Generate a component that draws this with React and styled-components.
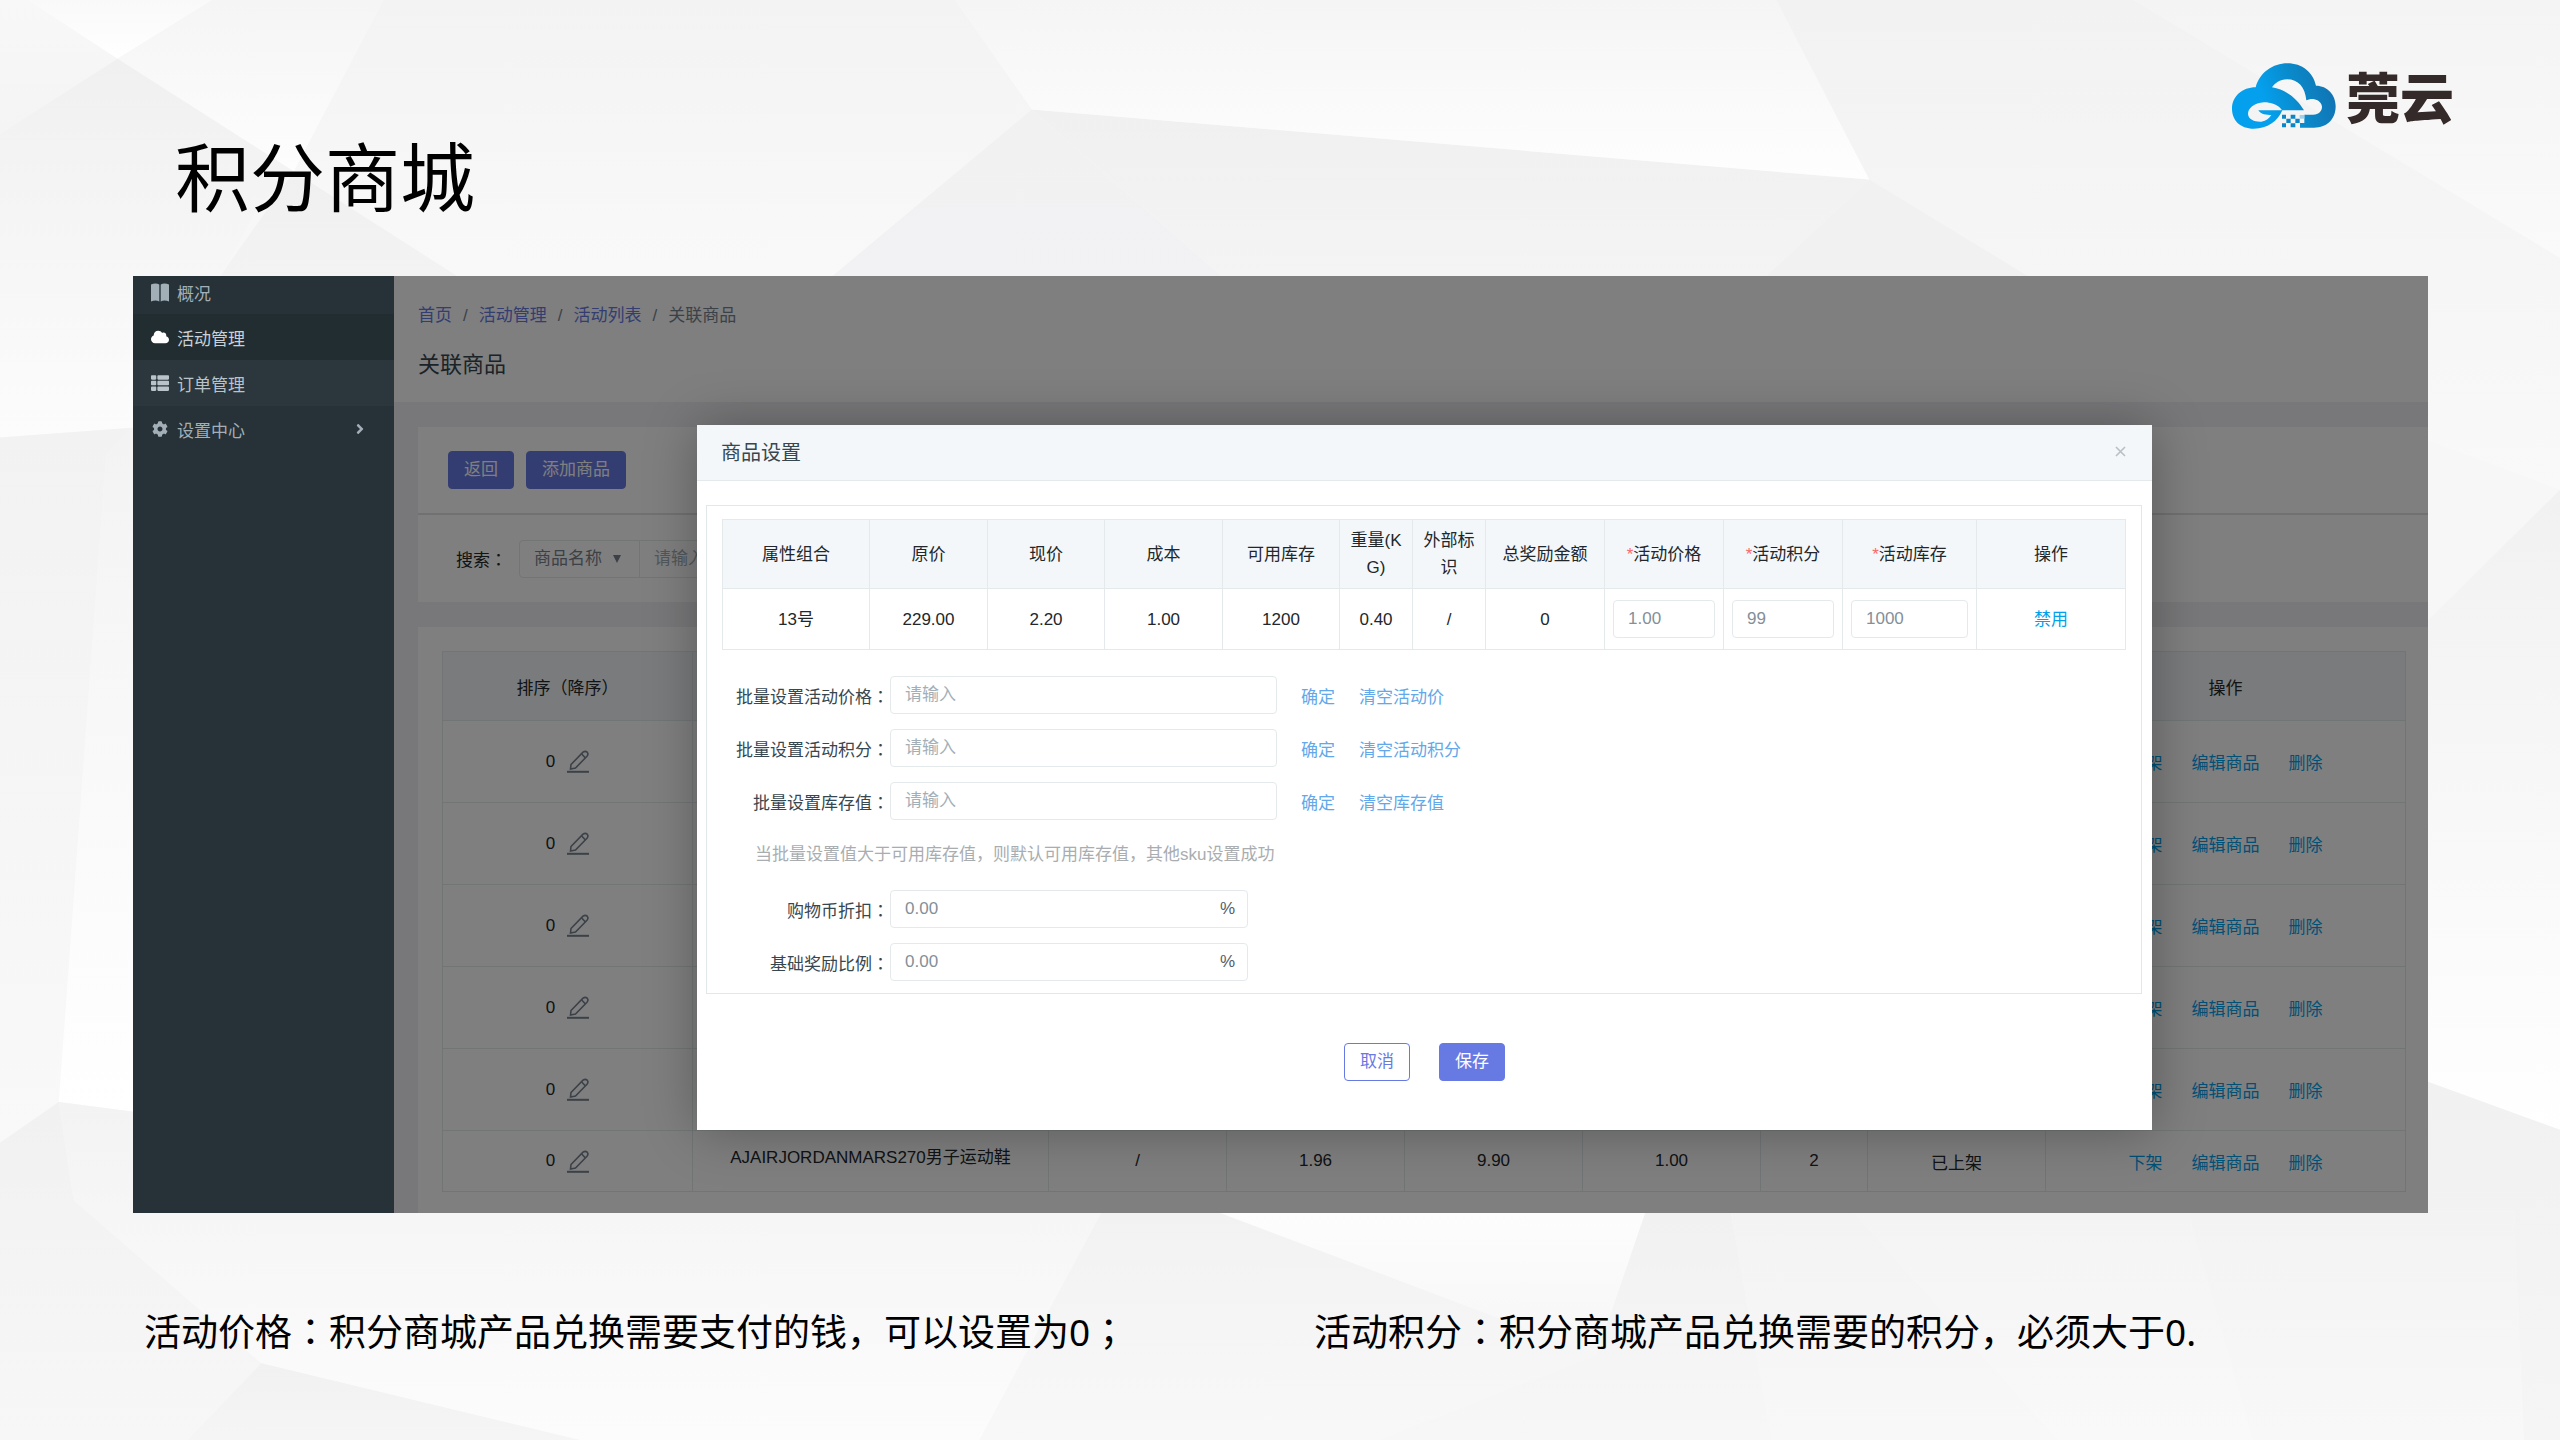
import React from 'react'
import styled, { createGlobalStyle, css } from 'styled-components'
import { FaCloud, FaCog, FaThList, FaAngleRight } from 'react-icons/fa'

const GlobalStyle = createGlobalStyle`
  * {
    box-sizing: border-box;
  }

  body {
    margin: 0;
    font-family: 'Liberation Sans', 'Noto Sans CJK SC', sans-serif;
    font-size: 17px;
    color: #37474f;
  }

  a {
    text-decoration: none;
  }

  button, input, select {
    font: inherit;
  }
`;

const Slide = styled.div`
  position: relative;
  z-index: 0;
  display: flex;
  flex-direction: column;
  min-height: 100vh;
  background: #f7f7f7;
`;

const Facets = styled.svg`
  position: absolute;
  inset: 0;
  z-index: -1;
  width: 100%;
  height: 100%;
`;

const SlideHeader = styled.header`
  display: flex;
  justify-content: space-between;
  align-items: flex-start;
  height: 276px;
  padding: 62px 106px 0 175px;
`;

const SlideTitle = styled.h1`
  margin: 56px 0 0;
  font-family: 'Noto Sans CJK SC', sans-serif;
  font-size: 75px;
  font-weight: 400;
  line-height: 112px;
  color: #000;
`;

const Brand = styled.div`
  display: flex;
  align-items: center;
  gap: 10px;
  height: 68px;
  font-family: 'Noto Sans CJK SC', sans-serif;
  font-size: 54px;
  font-weight: 900;
  line-height: 68px;
  color: #332a29;
`;

const Screen = styled.section`
  display: grid;
  grid-template-columns: 261px 1fr;
  margin: 0 132px 0 133px;
`;

const Sidebar = styled.nav`
  display: flex;
  flex-direction: column;
  background: #263238;
`;

const MenuItem = styled.a`
  display: flex;
  align-items: center;
  gap: 8px;
  height: 46px;
  padding: 0 25px 0 18px;
  color: #a3afb7;
  ${({ $first }) => $first && css`
    height: 38px;
    padding-bottom: 6px;
  `}
  ${({ $active }) => $active && css`
    background: #222d32;
    color: #c9d1d6;
  `}
  ${({ $hover }) => $hover && css`
    background: #2b373d;
    color: #b9c3c9;
  `}

  svg {
    flex: none;
    min-width: 18px;
    color: ${({ $active }) => ($active ? '#fff' : 'inherit')};
  }
`;

const MenuText = styled.span`
  flex: 1;
`;

const Main = styled.main`
  position: relative;
  background: #f1f1f5;
`;

const PageHeader = styled.div`
  height: 126px;
  padding: 26px 24px 0;
  background: #fff;
`;

const Breadcrumb = styled.div`
  display: flex;
  gap: 11px;
  line-height: 28px;
  color: #76838f;

  a {
    color: #677ae4;
  }
`;

const PageTitle = styled.h2`
  margin: 19px 0 0;
  font-size: 22px;
  font-weight: 400;
  line-height: 32px;
  color: #37474f;
`;

const Panel = styled.div`
  margin: 25px 0 0 24px;
  background: #fff;
`;

const Toolbar = styled.div`
  display: flex;
  gap: 12px;
  padding: 24px 30px;
  border-bottom: 2px solid #dfe2e4;
`;

const Button = styled.button`
  height: 38px;
  padding: 0 15px;
  border: 1px solid #677ae4;
  border-radius: 4px;
  line-height: 34px;
  background: ${({ $outline }) => ($outline ? '#fff' : '#677ae4')};
  color: ${({ $outline }) => ($outline ? '#677ae4' : '#fff')};
`;

const SearchBar = styled.div`
  display: flex;
  align-items: center;
  height: 87px;
  padding: 0 38px;
`;

const SearchLabel = styled.label`
  width: 63px;
  color: #22272b;
`;

const SelectBox = styled.div`
  display: flex;
  align-items: center;
  width: 121px;
  height: 38px;
  padding: 0 18px 0 14px;
  border: 1px solid #e4eaec;
  border-radius: 4px 0 0 4px;
  color: #76838f;
`;

const Select = styled.select`
  flex: 1;
  min-width: 0;
  padding: 0;
  border: 0;
  appearance: none;
  background: transparent;
  color: inherit;
`;

const Input = styled.input`
  width: ${({ $width }) => $width || '100%'};
  height: 38px;
  padding: 0 14px;
  border: 1px solid #e4eaec;
  border-radius: 4px;
  background: #fff;
  color: #838f99;

  &::placeholder {
    color: #a3afb7;
  }
`;

const SearchInput = styled(Input)`
  margin-left: -1px;
  border-radius: 0 4px 4px 0;
`;

const ListPanel = styled(Panel)`
  padding: 24px 22px 21px 24px;
`;

const Table = styled.table`
  width: 100%;
  table-layout: fixed;
  border-collapse: collapse;
  color: #22272b;

  th, td {
    padding: 0 9px;
    border: 1px solid #e4eaec;
    text-align: center;
    font-weight: 400;
  }

  th {
    background: #f3f7fa;
  }
`;

const Col = styled.col`
  width: ${({ $width }) => $width}px;
`;

const Row = styled.tr`
  height: ${({ $height }) => $height}px;
`;

const SortCell = styled.div`
  display: flex;
  align-items: center;
  justify-content: center;
  gap: 12px;

  svg {
    color: #76838f;
  }
`;

const ProductName = styled.div`
  padding-bottom: 12px;
  white-space: nowrap;
`;

const Actions = styled.div`
  display: flex;
  justify-content: center;
  gap: 29px;
`;

const Link = styled.a`
  color: ${({ $soft }) => ($soft ? '#62a8ea' : '#03a0ec')};
`;

const Backdrop = styled.div`
  position: absolute;
  inset: 0;
  display: flex;
  align-items: flex-start;
  padding: 149px 277px 0 303px;
  overflow: hidden;
  background: rgba(0, 0, 0, 0.5);
`;

const Modal = styled.div`
  flex: 1;
  background: #fff;
  box-shadow: 1px 1px 50px rgba(0, 0, 0, 0.3);
`;

const ModalHeader = styled.div`
  display: flex;
  justify-content: space-between;
  align-items: center;
  height: 56px;
  padding: 0 25px 2px 24px;
  border-bottom: 1px solid #e4eaec;
  background: #f3f7fa;
`;

const ModalTitle = styled.h3`
  margin: 0;
  font-size: 20px;
  font-weight: 400;
  color: #37474f;
`;

const CloseButton = styled.button`
  display: flex;
  padding: 0;
  border: 0;
  background: transparent;
  color: #b9bfc4;
`;

const ModalBody = styled.div`
  margin: 24px 10px 0 9px;
  padding: 13px 15px 12px;
  border: 1px solid #e0e8ea;
`;

const SkuTable = styled(Table)`
  line-height: 27px;
  word-break: break-all;

  td {
    padding: 0 8px;
  }
`;

const Required = styled.span`
  color: #f96868;
`;

const FormRows = styled.form`
  display: flex;
  flex-direction: column;
  gap: 15px;
  margin-top: 26px;
`;

const FormRow = styled.div`
  display: flex;
  align-items: center;
  gap: 24px;
  height: 38px;
`;

const Label = styled.label`
  width: 167px;
  margin-right: -23px;
  text-align: right;
  color: #37474f;
`;

const Hint = styled.p`
  margin: 0;
  padding-left: 33px;
  line-height: 40px;
  color: #a9adb0;
`;

const PercentBox = styled.div`
  display: flex;
  align-items: center;
  width: 358px;
  height: 38px;
  padding-right: 12px;
  border: 1px solid #e4eaec;
  border-radius: 4px;
  color: #526069;
`;

const PercentInput = styled(Input)`
  flex: 1;
  height: 34px;
  border: 0;
`;

const ModalFooter = styled.div`
  display: flex;
  justify-content: center;
  gap: 29px;
  padding: 49px 0;
`;

const Captions = styled.footer`
  display: flex;
  padding: 89px 144px 70px;
  font-family: 'Noto Sans', 'Noto Sans CJK SC', sans-serif;
  font-size: 37px;
  line-height: 56px;
  color: #000;
`;

const Caption = styled.p`
  flex: ${({ $basis }) => `0 0 ${$basis}`};
  margin: 0;
  white-space: nowrap;
`;

// full-width colons sit in the middle of their box
const Mark = styled.span`
  font-family: 'Noto Sans CJK JP', sans-serif;
`;

const facets = [
  ['0,0 17,0 72,36 0,82', '#f8f8f8', '#f4f4f4'],
  ['17,0 130,0 72,36', '#f9f9f9', '#ffffff'],
  ['130,0 235,0 180,105 72,36', '#f5f5f5', '#fdfdfd'],
  ['72,36 180,105 158,127 135,169 81,262 0,268 0,82', '#f0f0f0', '#fcfcfc'],
  ['180,105 280,169 340,220 81,262 135,169', '#f0f0f1', '#f7f7f7'],
  ['235,0 585,0 632,67 510,169 340,220 280,169 180,105', '#f3f3f3', '#fbfbfb'],
  ['632,67 748,169 748,200 480,200 510,169', '#f1f1f2', '#f2f2f4'],
  ['632,67 1145,110 1082,169 1082,200 748,200 748,169', '#f0f0f0', '#f5f5f5'],
  ['585,0 1088,0 1145,110 632,67', '#f5f5f5', '#fefefe'],
  ['1088,0 1307,0 1568,158 1568,300 1300,200 1242,169 1145,110', '#f2f2f3', '#f9f9f9'],
  ['1145,110 1242,169 1300,200 1082,200 1082,169', '#f1f1f2', '#f1f1f1'],
  ['1307,0 1568,0 1568,158', '#f4f4f4', '#fafafa'],
  ['0,268 81,262 81,290 65,278 36,675 0,700', '#f2f2f2', '#f9f9f9'],
  ['65,278 81,262 90,300 90,682 36,675', '#f3f3f3', '#ffffff'],
  ['0,700 36,675 45,735 160,835 115,882 0,882', '#f1f1f2', '#f7f7f8'],
  ['36,675 90,682 675,742 600,882 355,882 160,835 45,735', '#f3f3f4', '#fcfcfc'],
  ['160,835 355,882 115,882', '#f1f1f2', '#f5f5f5'],
  ['675,742 745,742 978,830 845,882 600,882', '#f2f2f3', '#f8f8f8'],
  ['745,742 1008,742 978,830', '#fdfdfd', '#f6f6f6'],
  ['1008,742 1060,742 1085,882 845,882 978,830', '#f1f1f2', '#f7f7f7'],
  ['1060,742 1135,742 1260,882 1085,882', '#f3f3f4', '#f8f8f8'],
  ['1135,742 1340,742 1380,882 1260,882', '#f4f4f5', '#f9f9f9'],
  ['1340,742 1540,742 1546,882 1380,882', '#f3f3f4', '#f8f8f8'],
  ['1480,387 1568,300 1568,700 1480,660', '#f1f1f2', '#ffffff'],
  ['1480,660 1568,692 1568,882 1546,882 1540,742 1480,742', '#f1f1f2', '#f5f5f6'],
]

const menu = [
  { text: '概况', icon: <BookIcon />, first: true },
  { text: '活动管理', icon: <FaCloud size={18} />, active: true },
  { text: '订单管理', icon: <FaThList size={18} />, hover: true },
  { text: '设置中心', icon: <FaCog size={16} />, arrow: true },
]

const listColumns = [250, 356, 178, 178, 178, 178, 107, 178, 360]

const products = [
  { id: 1 },
  { id: 2 },
  { id: 3 },
  { id: 4 },
  { id: 5 },
  {
    id: 6,
    name: 'AJAIRJORDANMARS270男子运动鞋',
    cells: ['/', '1.96', '9.90', '1.00', '2', '已上架'],
  },
]

const skuColumns = [
  { title: '属性组合', width: 147 },
  { title: '原价', width: 118 },
  { title: '现价', width: 117 },
  { title: '成本', width: 118 },
  { title: '可用库存', width: 117 },
  { title: '重量(KG)', width: 73 },
  { title: '外部标识', width: 73 },
  { title: '总奖励金额', width: 119 },
  { title: '活动价格', width: 119, required: true },
  { title: '活动积分', width: 119, required: true },
  { title: '活动库存', width: 134, required: true },
  { title: '操作', width: 149 },
]

const batchFields = [
  { id: 'batch-price', label: '批量设置活动价格', clear: '清空活动价' },
  { id: 'batch-points', label: '批量设置活动积分', clear: '清空活动积分' },
  { id: 'batch-stock', label: '批量设置库存值', clear: '清空库存值' },
]

const percentFields = [
  { id: 'coin-discount', label: '购物币折扣' },
  { id: 'base-reward', label: '基础奖励比例' },
]

function BookIcon() {
  return (
    <svg width="18" height="19" viewBox="0 0 18 19" fill="currentColor">
      <path d="M0 1.500C3 .2 6 .2 8.300 1.500V18.500C6 17 3 17 0 18.500Z" />
      <path d="M9.700 1.500C12 .2 15 .2 18 1.500V18.500C15 17 12 17 9.700 18.500Z" />
    </svg>
  )
}

function EditIcon() {
  return (
    <svg width="22" height="23" viewBox="0 0 22 23" fill="none" stroke="currentColor" strokeWidth="1.6">
      <path d="M4 14.500L16 2.200Q18.300.400 20.200 2.200Q21.800 4.200 20 6.200L8.500 18L3.500 19Z" />
      <path d="M14.500 3.800L18.200 7.800" />
      <path d="M0 21.800H22" strokeWidth="2" />
    </svg>
  )
}

function CloudLogo() {
  return (
    <svg width="104" height="66" viewBox="99 70 312 198">
      <defs>
        <linearGradient id="cloud" x1="0" y1="0.6" x2="1" y2="0.4">
          <stop offset="0.3" stopColor="#04a0ee" />
          <stop offset="0.65" stopColor="#0a88c8" />
          <stop offset="1" stopColor="#1272b2" />
        </linearGradient>
      </defs>
      <path
        fill="url(#cloud)"
        fillRule="evenodd"
        d="M165 267C122 267 99 240 99 207C99 170 130 143 170 143C182 98 222 71 265 71C310 71 342 98 351 138C385 138 410 165 410 200C410 238 385 264 345 264H303V250H316V225H342C360 224 369 213 369 201C367 184 350 177 335 178L322 182C318 142 298 119 264 119C242 120 228 130 219 143C262 150 295 178 315 212H250C236 245 205 267 165 267ZM248 210C236 194 215 188 195 188C165 190 147 206 147 223C148 240 168 247 187 246C202 243 211 236 217 226C196 227 184 221 178 212H248Z"
      />
      <path fill="#0a86c6" d="M249 225h12v12h-12zM275 225h14v12h-14zM262 237h13v13h-13zM289 237h13v13h-13zM249 251h12v12h-12zM275 251h14v12h-14z" />
      <path fill="#9fd0ea" d="M302 226h14v11h-14z" />
    </svg>
  )
}

function Background() {
  return (
    <Facets viewBox="0 0 1568 882" preserveAspectRatio="none" aria-hidden="true">
      <defs>
        {facets.map(([points, from, to], i) => (
          <linearGradient key={points} id={`facet-${i}`} x1="0" y1="0" x2="0" y2="1">
            <stop offset="0" stopColor={from} />
            <stop offset="1" stopColor={to} />
          </linearGradient>
        ))}
      </defs>
      {facets.map(([points], i) => (
        <polygon key={points} points={points} fill={`url(#facet-${i})`} />
      ))}
    </Facets>
  )
}

function ProductList() {
  return (
    <ListPanel>
      <Table>
        <colgroup>
          {listColumns.map((width, i) => <Col key={i} $width={width} />)}
        </colgroup>
        <thead>
          <Row $height={69}>
            <th>排序（降序）</th>
            {listColumns.slice(2).map((_, i) => <th key={i} />)}
            <th>操作</th>
          </Row>
        </thead>
        <tbody>
          {products.map((product) => (
            <Row key={product.id} $height={product.name ? 61 : 82}>
              <td>
                <SortCell>
                  0
                  <EditIcon />
                </SortCell>
              </td>
              <td>{product.name && <ProductName>{product.name}</ProductName>}</td>
              {(product.cells || ['', '', '', '', '', '']).map((cell, i) => <td key={i}>{cell}</td>)}
              <td>
                <Actions>
                  <Link href="#off">下架</Link>
                  <Link href="#edit">编辑商品</Link>
                  <Link href="#delete">删除</Link>
                </Actions>
              </td>
            </Row>
          ))}
        </tbody>
      </Table>
    </ListPanel>
  )
}

function SkuSettings() {
  return (
    <SkuTable>
      <colgroup>
        {skuColumns.map((col) => <Col key={col.title} $width={col.width} />)}
      </colgroup>
      <thead>
        <Row $height={69}>
          {skuColumns.map((col) => (
            <th key={col.title}>
              {col.required && <Required>*</Required>}
              {col.title}
            </th>
          ))}
        </Row>
      </thead>
      <tbody>
        <Row $height={61}>
          <td>13号</td>
          <td>229.00</td>
          <td>2.20</td>
          <td>1.00</td>
          <td>1200</td>
          <td>0.40</td>
          <td>/</td>
          <td>0</td>
          <td><Input aria-label="活动价格" defaultValue="1.00" /></td>
          <td><Input aria-label="活动积分" defaultValue="99" /></td>
          <td><Input aria-label="活动库存" defaultValue="1000" /></td>
          <td><Link href="#disable">禁用</Link></td>
        </Row>
      </tbody>
    </SkuTable>
  )
}

function ProductModal() {
  return (
    <Modal role="dialog" aria-label="商品设置">
      <ModalHeader>
        <ModalTitle>商品设置</ModalTitle>
        <CloseButton aria-label="关闭">
          <svg width="13" height="13" viewBox="0 0 13 13" stroke="currentColor" strokeWidth="1.6">
            <path d="M2 2L11 11M11 2L2 11" />
          </svg>
        </CloseButton>
      </ModalHeader>
      <ModalBody>
        <SkuSettings />
        <FormRows>
          {batchFields.map((field) => (
            <FormRow key={field.id}>
              <Label htmlFor={field.id}>{field.label}<Mark>：</Mark></Label>
              <Input id={field.id} placeholder="请输入" $width="387px" />
              <Link $soft href="#confirm">确定</Link>
              <Link $soft href="#clear">{field.clear}</Link>
            </FormRow>
          ))}
          <Hint>当批量设置值大于可用库存值，则默认可用库存值，其他sku设置成功</Hint>
          {percentFields.map((field) => (
            <FormRow key={field.id}>
              <Label htmlFor={field.id}>{field.label}<Mark>：</Mark></Label>
              <PercentBox>
                <PercentInput id={field.id} defaultValue="0.00" />
                %
              </PercentBox>
            </FormRow>
          ))}
        </FormRows>
      </ModalBody>
      <ModalFooter>
        <Button $outline>取消</Button>
        <Button>保存</Button>
      </ModalFooter>
    </Modal>
  )
}

function App() {
  return (
    <Slide>
      <GlobalStyle />
      <Background />
      <SlideHeader>
        <SlideTitle>积分商城</SlideTitle>
        <Brand>
          <CloudLogo />
          莞云
        </Brand>
      </SlideHeader>

      <Screen>
        <Sidebar>
          {menu.map((item) => (
            <MenuItem
              key={item.text}
              href="#menu"
              $first={item.first}
              $active={item.active}
              $hover={item.hover}
            >
              {item.icon}
              <MenuText>{item.text}</MenuText>
              {item.arrow && <FaAngleRight size={16} />}
            </MenuItem>
          ))}
        </Sidebar>
        <Main>
          <PageHeader>
            <Breadcrumb>
              <a href="#home">首页</a>
              <span>/</span>
              <a href="#activity">活动管理</a>
              <span>/</span>
              <a href="#list">活动列表</a>
              <span>/</span>
              <span>关联商品</span>
            </Breadcrumb>
            <PageTitle>关联商品</PageTitle>
          </PageHeader>
          <Panel>
            <Toolbar>
              <Button>返回</Button>
              <Button>添加商品</Button>
            </Toolbar>
            <SearchBar>
              <SearchLabel htmlFor="search-by">搜索<Mark>：</Mark></SearchLabel>
              <SelectBox>
                <Select id="search-by">
                  <option>商品名称</option>
                </Select>
                <svg width="8" height="8" viewBox="0 0 8 8" fill="currentColor">
                  <path d="M0 0H8L4 8Z" />
                </svg>
              </SelectBox>
              <SearchInput aria-label="搜索内容" placeholder="请输入" $width="300px" />
            </SearchBar>
          </Panel>
          <ProductList />
          <Backdrop>
            <ProductModal />
          </Backdrop>
        </Main>
      </Screen>

      <Captions>
        <Caption $basis="51.5%">
          活动价格<Mark>：</Mark>积分商城产品兑换需要支付的钱，可以设置为0<Mark>；</Mark>
        </Caption>
        <Caption $basis="auto">
          活动积分<Mark>：</Mark>积分商城产品兑换需要的积分，必须大于0.
        </Caption>
      </Captions>
    </Slide>
  )
}

export default App
